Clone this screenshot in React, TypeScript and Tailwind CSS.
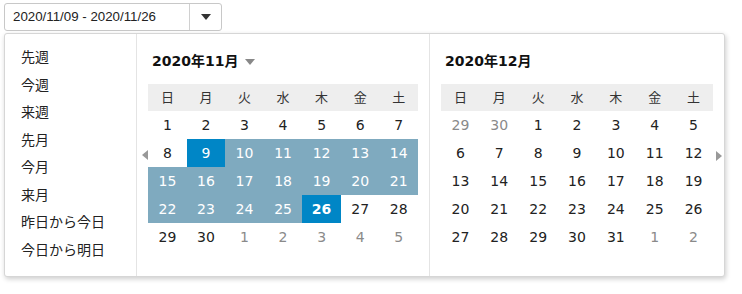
import React from "react"

// ── Data ───────────────────────────────────────────────────────────────────
const WEEK = ["日", "月", "火", "水", "木", "金", "土"]
const PRESETS = ["先週", "今週", "来週", "先月", "今月", "来月", "昨日から今日", "今日から明日"]

interface Day {
  n: number
  muted?: boolean
  state?: "start" | "end" | "range"
}

function buildMonth(first: number, days: number, prevDays: number, range?: [number, number]): Day[] {
  const out: Day[] = []
  for (let i = first - 1; i >= 0; i--) out.push({ n: prevDays - i, muted: true })
  for (let d = 1; d <= days; d++) {
    let state: Day["state"]
    if (range) {
      if (d === range[0]) state = "start"
      else if (d === range[1]) state = "end"
      else if (d > range[0] && d < range[1]) state = "range"
    }
    out.push({ n: d, state })
  }
  let next = 1
  while (out.length < 35) out.push({ n: next++, muted: true })
  return out
}

const NOV = buildMonth(0, 30, 31, [9, 26])
const DEC = buildMonth(2, 31, 30)

const FONT = "font-['DejaVu_Sans','Noto_Sans_CJK_JP',sans-serif]"

function Tri({ className = "" }: { className?: string }) {
  return (
    <svg width="10" height="6" viewBox="0 0 10 6" className={className}>
      <path d="M0 0 L10 0 L5 6 Z" fill="currentColor" />
    </svg>
  )
}

function Month({ title, days, caret }: { title: string; days: Day[]; caret?: boolean }) {
  return (
    <div className="w-[294px] px-[11px]">
      <div className="h-[50px] pl-1 pt-[17px] flex items-start gap-[6px]">
        <span className="text-[14px] font-bold text-[#111] leading-[20px]">{title}</span>
        {caret && <Tri className="text-[#888] mt-[8px]" />}
      </div>
      <div className="grid grid-cols-7 bg-[#eeeeee] h-[27px] text-[13px] text-[#333]">
        {WEEK.map((w) => (
          <div key={w} className="flex items-center justify-center">{w}</div>
        ))}
      </div>
      <div className="grid grid-cols-7 text-[14px]">
        {days.map((d, i) => {
          let cls = "text-[#222]"
          if (d.muted) cls = "text-[#8a8a8a]"
          if (d.state === "range") cls = "bg-[#7faabf] text-white"
          if (d.state === "start") cls = "bg-[#0086c6] text-white"
          if (d.state === "end") cls = "bg-[#0086c6] text-white font-bold"
          return (
            <div key={i} className={`h-[28px] flex items-center justify-center ${cls}`}>{d.n}</div>
          )
        })}
      </div>
    </div>
  )
}

export default function App() {
  return (
    <div className={`w-[742px] h-[294px] bg-white pl-1 pt-[3px] ${FONT}`}>
      {/* Input */}
      <div className="flex w-[218px] h-[28px] border border-[#c8c8c8] rounded-[3px] bg-white">
        <div className="flex-1 flex items-center pl-[8px] text-[13.3px] text-[#222] font-['Liberation_Sans',sans-serif]">
          2020/11/09 - 2020/11/26
        </div>
        <div className="w-[32px] border-l border-[#d0d0d0] flex items-center justify-center text-[#333]">
          <Tri />
        </div>
      </div>

      {/* Popup */}
      <div className="relative mt-[2px] w-[721px] h-[244px] flex bg-white border border-[#d6d6d6] rounded-[3px] shadow-[1px_2px_5px_rgba(0,0,0,0.2)]">
        <div className="w-[133px] border-r border-[#e4e4e4] pt-[10px] pl-[16px]">
          {PRESETS.map((p) => (
            <div key={p} className="h-[27.5px] flex items-center text-[14px] text-[#222]">{p}</div>
          ))}
        </div>
        <Month title="2020年11月" days={NOV} caret />
        <div className="border-l border-[#e4e4e4]">
          <Month title="2020年12月" days={DEC} />
        </div>

        <svg width="6" height="10" viewBox="0 0 6 10" className="absolute left-[137px] top-[116px] text-[#999]">
          <path d="M6 0 L6 10 L0 5 Z" fill="currentColor" />
        </svg>
        <svg width="6" height="10" viewBox="0 0 6 10" className="absolute left-[711px] top-[117px] text-[#999]">
          <path d="M0 0 L0 10 L6 5 Z" fill="currentColor" />
        </svg>
      </div>
    </div>
  )
}
